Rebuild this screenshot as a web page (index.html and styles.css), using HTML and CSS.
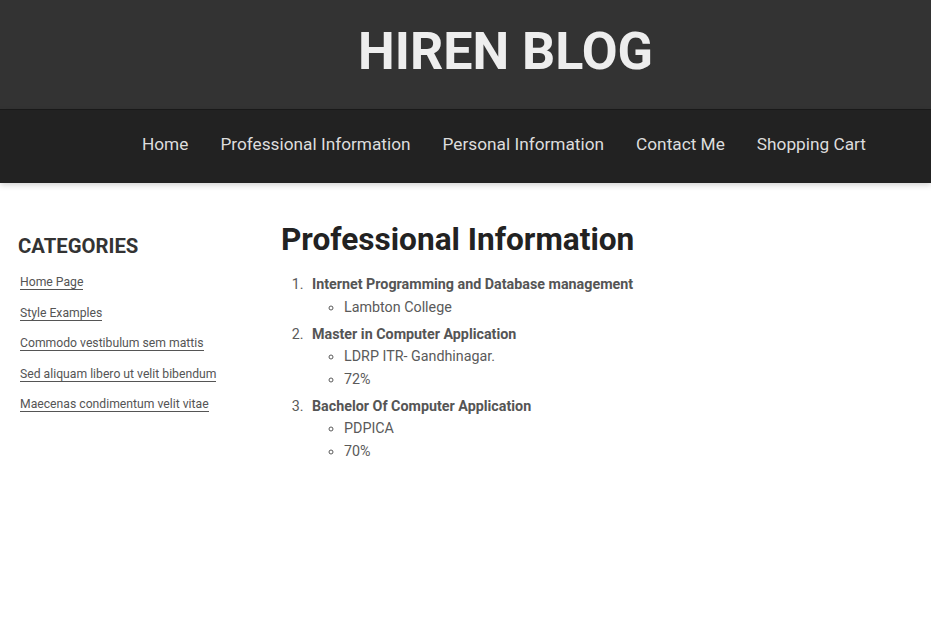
FILE: index.html
```html
<!DOCTYPE html>
<html lang="en">
<head>
<meta charset="utf-8">
<title>Hiren Blog</title>
<link rel="stylesheet" href="styles.css">
</head>
<body>
<header class="site-header">
  <h1 class="site-title">HIREN BLOG</h1>
</header>
<nav class="site-nav">
  <a href="#" class="nav-link">Home</a>
  <a href="#" class="nav-link">Professional Information</a>
  <a href="#" class="nav-link">Personal Information</a>
  <a href="#" class="nav-link">Contact Me</a>
  <a href="#" class="nav-link">Shopping Cart</a>
</nav>
<div class="page">
  <aside class="sidebar">
    <h3 class="sidebar-title">CATEGORIES</h3>
    <ul class="cat-list">
      <li><a href="#">Home Page</a></li>
      <li><a href="#">Style Examples</a></li>
      <li><a href="#">Commodo vestibulum sem mattis</a></li>
      <li><a href="#">Sed aliquam libero ut velit bibendum</a></li>
      <li><a href="#">Maecenas condimentum velit vitae</a></li>
    </ul>
  </aside>
  <main class="content">
    <h2 class="content-title">Professional Information</h2>
    <ol class="edu-list">
      <li><strong>Internet Programming and Database management</strong>
        <ul class="sub-list"><li>Lambton College</li></ul>
      </li>
      <li><strong>Master in Computer Application</strong>
        <ul class="sub-list"><li>LDRP ITR- Gandhinagar.</li><li>72%</li></ul>
      </li>
      <li><strong>Bachelor Of Computer Application</strong>
        <ul class="sub-list"><li>PDPICA</li><li>70%</li></ul>
      </li>
    </ol>
  </main>
</div>
</body>
</html>
```
FILE: styles.css
```css
* { box-sizing: border-box; }
html, body { margin: 0; padding: 0; background: #fff; }
body { font-family: Roboto, "Liberation Sans", sans-serif; color: #555; }

.site-header {
  background: #333;
  height: 110px;
  padding: 26px 0 0 80px;
  border-bottom: 1px solid #1a1a1a;
}
.site-title {
  margin: 0;
  text-align: center;
  font-size: 52px;
  line-height: 52px;
  font-weight: 700;
  color: #eee;
}

.site-nav {
  background: #222;
  height: 73px;
  display: flex;
  justify-content: flex-end;
  gap: 32px;
  padding: 24px 65px 0 0;
  box-shadow: 0 2px 6px rgba(0,0,0,0.18);
  position: relative;
}
.nav-link {
  color: #ddd;
  text-decoration: none;
  font-size: 17.25px;
  line-height: 21px;
}

.page {
  display: flex;
}
.sidebar {
  width: 281px;
  padding: 51px 0 0 18px;
}
.sidebar-title {
  margin: 0;
  font-size: 20.3px;
  line-height: 24px;
  font-weight: 700;
  color: #333;
}
.cat-list {
  list-style: none;
  margin: 17px 0 0;
  padding: 0 0 0 2px;
}
.cat-list li {
  font-size: 12.2px;
  line-height: 14px;
  height: 30.5px;
}
.cat-list a {
  color: #555;
  text-decoration: none;
  border-bottom: 1px solid #555;
}

.content {
  flex: 1;
  padding-top: 38px;
}
.content-title {
  margin: 0;
  font-size: 31.6px;
  line-height: 38px;
  font-weight: 700;
  color: #222;
}
.edu-list {
  margin: 14px 0 0;
  padding-left: 26px;
  font-size: 14.3px;
  line-height: 22.5px;
  color: #5a5a5a;
}
.edu-list > li { margin-bottom: 4.5px; padding-left: 5px; }
.edu-list strong { color: #555; }
.sub-list {
  list-style: circle;
  margin: 0;
  padding-left: 32px;
}
```
